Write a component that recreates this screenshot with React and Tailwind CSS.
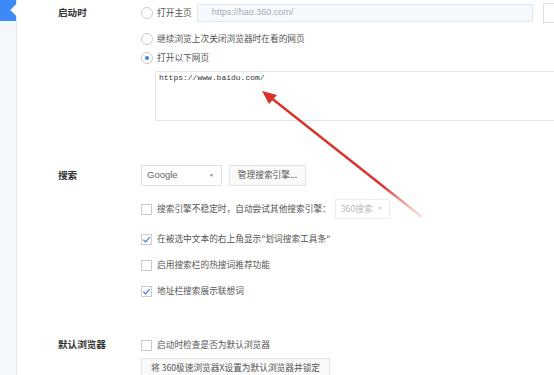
import React from 'react';

const cjk = { fontFamily: '"Noto Sans CJK SC", "Noto Sans", sans-serif' };

const Radio = ({ checked }) => (
  <span className="flex h-[12px] w-[12px] shrink-0 items-center justify-center rounded-full border border-[#c9ccd1] bg-white">
    {checked && <span className="h-[4px] w-[4px] rounded-full bg-[#3b82e8]" />}
  </span>
);

const Check = ({ checked }) => (
  <span className="flex h-[11px] w-[11px] shrink-0 items-center justify-center border border-[#c9ccd1] bg-white">
    {checked && (
      <svg width="9" height="9" viewBox="0 0 10 10">
        <path d="M1.5 5.2 L4 7.6 L8.6 2.4" fill="none" stroke="#3b82e8" strokeWidth="1.4" />
      </svg>
    )}
  </span>
);

const Option = ({ children, className = '' }) => (
  <span className={`text-[8.7px] leading-none text-[#555] ${className}`} style={cjk}>
    {children}
  </span>
);

const Label = ({ children, h }) => (
  <div className={`flex w-[83px] shrink-0 items-center ${h}`}>
    <span className="text-[9.6px] font-semibold leading-none text-[#333]" style={cjk}>
      {children}
    </span>
  </div>
);

const CheckRow = ({ checked, children, className = '' }) => (
  <div className={`flex h-[20px] items-center gap-[5px] ${className}`}>
    <Check checked={checked} />
    <Option>{children}</Option>
  </div>
);

export default function App() {
  return (
    <div className="relative flex h-[375px] w-[554px] overflow-hidden bg-white">
      {/* Sidebar */}
      <div className="relative w-[17px] shrink-0 border-r border-[#e6e9ee] bg-[#f4f7fb]">
        <div className="h-[21px] w-[16px] bg-[#3d8af7]" />
        <span className="absolute right-[-4px] top-[6px] h-[8px] w-[8px] rotate-45 bg-white" />
      </div>

      <div className="flex flex-col pl-[41px]">
        {/* 启动时 */}
        <div className="flex">
          <Label h="h-[26px]">启动时</Label>
          <div className="flex flex-col">
            <div className="flex h-[26px] items-center">
              <Radio />
              <Option className="ml-[4px]">打开主页</Option>
              <div className="ml-[5px] flex h-[18px] w-[336px] items-center border border-[#e3e8ef] bg-[#f5f8fd] pl-[14px]">
                <span className="text-[9px] text-[#a8adb5]" style={{ fontFamily: '"Liberation Sans", sans-serif' }}>
                  https://hao.360.com/
                </span>
              </div>
              <div className="ml-[10px] h-[20px] w-[40px] shrink-0 border border-[#dcdfe4] bg-white" />
            </div>
            <div className="mt-[4px] flex h-[18px] items-center gap-[4px]">
              <Radio />
              <Option>继续浏览上次关闭浏览器时在看的网页</Option>
            </div>
            <div className="mt-[1px] flex h-[18px] items-center gap-[4px]">
              <Radio checked />
              <Option>打开以下网页</Option>
            </div>
            <div
              className="ml-[14px] mt-[4px] h-[50px] w-[440px] border border-[#e4e6ea] bg-white px-[3px] pt-[2px] text-[8px] leading-[8px] text-[#333]"
              style={{ fontFamily: '"Liberation Mono", monospace' }}
            >
              https://www.baidu.com/
            </div>
          </div>
        </div>

        {/* 搜索 */}
        <div className="mt-[44px] flex">
          <Label h="h-[21px]">搜索</Label>
          <div className="flex flex-col">
            <div className="flex h-[21px] items-center gap-[7px]">
              <div className="flex h-[21px] w-[81px] items-center justify-between border border-[#e1e3e7] bg-white pl-[5px] pr-[7px]">
                <span className="text-[9.5px] text-[#666]" style={{ fontFamily: '"Liberation Sans", sans-serif' }}>
                  Google
                </span>
                <span className="text-[5px] text-[#888]">▼</span>
              </div>
              <div className="flex h-[21px] w-[77px] items-center justify-center border border-[#e1e3e7] bg-[#fafafa]">
                <Option className="text-[#555]">管理搜索引擎...</Option>
              </div>
            </div>
            <div className="mt-[13px] flex h-[20px] items-center">
              <CheckRow>搜索引擎不稳定时，自动尝试其他搜索引擎：</CheckRow>
              <div className="ml-[4px] flex h-[20px] w-[55px] items-center justify-between border border-[#ebedf0] bg-white pl-[5px] pr-[6px]">
                <Option className="text-[#b4b7bc]">360搜索</Option>
                <span className="text-[5px] text-[#c4c6ca]">▼</span>
              </div>
            </div>
            <CheckRow checked className="mt-[10px]">在被选中文本的右上角显示"划词搜索工具条"</CheckRow>
            <CheckRow className="mt-[6px]">启用搜索栏的热搜词推荐功能</CheckRow>
            <CheckRow checked className="mt-[6px]">地址栏搜索展示联想词</CheckRow>
          </div>
        </div>

        {/* 默认浏览器 */}
        <div className="mt-[34px] flex">
          <Label h="h-[20px]">默认浏览器</Label>
          <div className="flex flex-col">
            <CheckRow>启动时检查是否为默认浏览器</CheckRow>
            <div className="mt-[3px] flex h-[20px] w-[189px] items-center justify-center border border-[#e1e3e7] bg-[#fafafa]">
              <Option>将 360极速浏览器X设置为默认浏览器并锁定</Option>
            </div>
          </div>
        </div>
      </div>

      {/* Red annotation arrow */}
      <svg className="pointer-events-none absolute left-0 top-0" width="554" height="375">
        <defs>
          <linearGradient id="arrowFade" gradientUnits="userSpaceOnUse" x1="266" y1="94" x2="422" y2="217">
            <stop offset="0" stopColor="#d8322a" />
            <stop offset="0.75" stopColor="#d8322a" />
            <stop offset="1" stopColor="#e8a39f" stopOpacity="0.3" />
          </linearGradient>
        </defs>
        <line x1="270" y1="97" x2="422" y2="217" stroke="url(#arrowFade)" strokeWidth="2.4" />
        <polygon points="262,91 277,95 269,104" fill="#d8322a" />
      </svg>
    </div>
  );
}
